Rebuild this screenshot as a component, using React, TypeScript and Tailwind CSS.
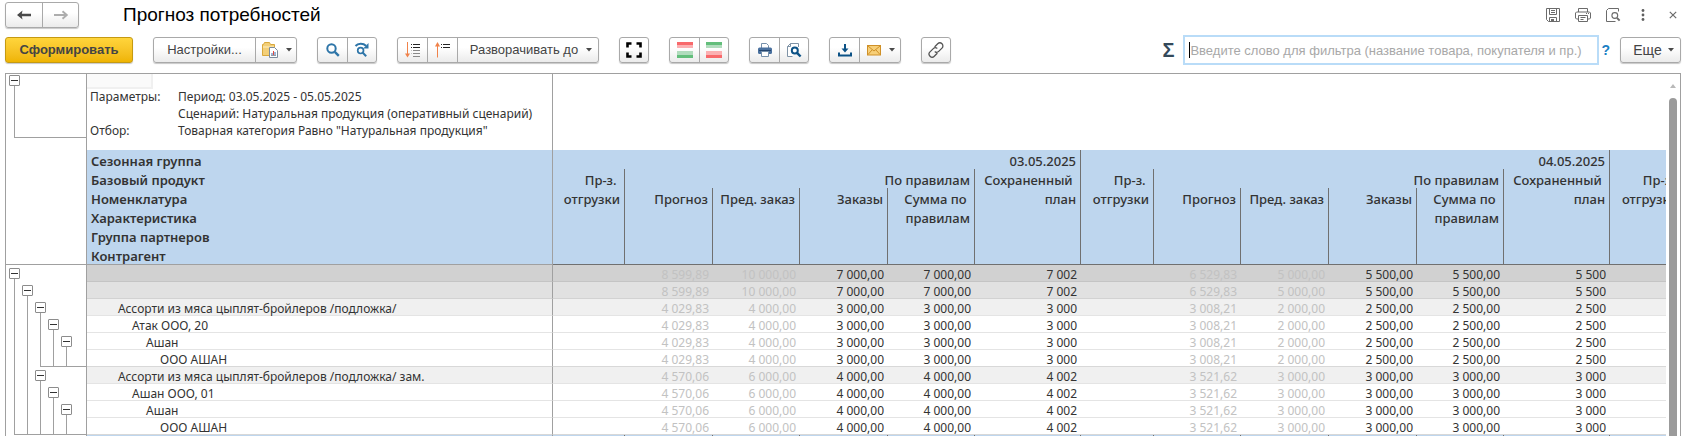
import React from "react";

/* ---------- icons ---------- */

const Svg = ({ w = 16, h = 16, children }: { w?: number; h?: number; children: React.ReactNode }) => (
  <svg width={w} height={h} viewBox={`0 0 ${w} ${h}`} fill="none" aria-hidden="true" className="shrink-0">
    {children}
  </svg>
);

const Caret = () => (
  <Svg w={6} h={4}>
    <path d="M0 0h6L3 3.6z" fill="#4a4a4a" />
  </Svg>
);

const ArrowLeft = () => (
  <Svg>
    <path d="M15 8H4" stroke="#4a4a4a" strokeWidth="2.4" />
    <path d="M1 8l5.5-4.6L5.600 8l.9 4.600z" fill="#4a4a4a" />
  </Svg>
);

const ArrowRight = () => (
  <Svg>
    <path d="M1 8h12M9.500 4.200L13.800 8l-4.300 3.800" stroke="#adadad" strokeWidth="1.900" />
  </Svg>
);

const FolderReport = () => (
  <Svg w={18} h={18}>
    <path d="M1.500 3.500h1l1-2h5l1 2h4v11h-12z" fill="#f3cf78" stroke="#d9a83c" />
    <path d="M2 6h11" stroke="#fbe6ae" strokeWidth="1.500" />
    <path d="M8.500 6.500h5l3 3v7h-8z" fill="#fff" stroke="#7b8b9c" />
    <path d="M11 14v-2M14 14v-3" stroke="#3b6fb0" />
    <path d="M12.500 14v-4" stroke="#e0483e" />
    <path d="M10 14.500h5" stroke="#8f9aa6" />
  </Svg>
);

const Search = () => (
  <Svg>
    <circle cx="6.500" cy="6.500" r="4.200" stroke="#2e75a8" strokeWidth="2" />
    <path d="M9.800 9.800l4 4" stroke="#2e75a8" strokeWidth="2.400" />
  </Svg>
);

const SearchNext = () => (
  <Svg>
    <path d="M1.500 4C4 1.200 9 .8 12 3.800" stroke="#2e75a8" strokeWidth="2" />
    <path d="M14.500 1v5.500H9.200z" fill="#2e75a8" />
    <circle cx="6.600" cy="8.600" r="2.900" stroke="#2e75a8" strokeWidth="1.700" />
    <path d="M8.800 10.800l3.400 3.400" stroke="#2e75a8" strokeWidth="2" />
  </Svg>
);

const ExpandRows = () => (
  <Svg>
    <path d="M2.500 0v13" stroke="#f0824a" />
    <path d="M0 11.500h5l-2.500 4z" fill="#f0824a" />
    <path d="M6 2.500h1M8 2.500h7M6 5.500h1M8 5.500h7" stroke="#222" />
    <path d="M8 8.500h7M8 11.500h7M8 14.500h7" stroke="#8a8a8a" />
    <path d="M6 8.500h1M6 11.500h1" stroke="#c4c4c4" />
  </Svg>
);

const CollapseRows = () => (
  <Svg>
    <path d="M2.500 3v12.500" stroke="#f0824a" />
    <path d="M0 4.500h5L2.500 0z" fill="#f0824a" />
    <path d="M6 2.500h1M8 2.500h7M6 5.500h1M8 5.500h7" stroke="#222" />
  </Svg>
);

const FullScreen = () => (
  <Svg>
    <path
      d="M1.500 5.500v-4h4M10.500 1.500h4v4M14.500 10.500v4h-4M5.500 14.500h-4v-4"
      stroke="#000"
      strokeWidth="2.600"
    />
  </Svg>
);

const Bands = ({ colors }: { colors: string[] }) => (
  <Svg>
    <path d="M0 0h16v3H0z" fill={colors[0]} />
    <path d="M0 3h16v3H0z" fill={colors[1]} />
    <path d="M0 9h16v4H0z" fill={colors[2]} />
    <path d="M0 13h16v3H0z" fill={colors[3]} />
  </Svg>
);

const Printer = () => (
  <Svg>
    <path d="M4.500 6V1.500h5l2 2V6" fill="#fff" stroke="#7690ab" />
    <rect x="1" y="5.500" width="14" height="6.500" rx="1.500" fill="#4a719f" />
    <path d="M2 8.500h12" stroke="#24456e" />
    <path d="M4.500 9.500h7v5h-7z" fill="#fff" stroke="#7690ab" />
  </Svg>
);

const Preview = () => (
  <Svg>
    <path d="M6.500 14.500h-5v-10l3-3h8V5" fill="#fff" stroke="#7f93a6" />
    <path d="M4.500 1.500v3h-3" stroke="#7f93a6" />
    <circle cx="8.800" cy="8.500" r="3" stroke="#0c5286" strokeWidth="2" />
    <path d="M11 10.800l3.600 3.700" stroke="#0c5286" strokeWidth="2.400" />
  </Svg>
);

const Download = () => (
  <Svg>
    <path d="M8 2v7" stroke="#0c5286" strokeWidth="2" />
    <path d="M4.500 6.500h7L8 10.500z" fill="#0c5286" />
    <path d="M2 10.500v3h12v-3" stroke="#0c5286" strokeWidth="2" />
  </Svg>
);

const Mail = () => (
  <Svg>
    <rect x="1.500" y="3.500" width="13" height="9.500" fill="#f7cf78" stroke="#cf9027" />
    <path d="M2 4l6 5 6-5M2 12.500l4.200-4.700M14 12.500L9.800 7.800" stroke="#cf9027" />
  </Svg>
);

const Link = () => (
  <Svg w={18} h={18}>
    <g stroke="#555" strokeWidth="1.300" strokeLinecap="round">
      <path d="M8 5.500l2.700-2.700a3 3 0 0 1 4.300 4.300L11.700 10.400a3 3 0 0 1-3.500.5" />
      <path d="M10 12.500l-2.700 2.700A3 3 0 0 1 3 10.900L6.300 7.600a3 3 0 0 1 3.500-.5" />
    </g>
  </Svg>
);

const Floppy = () => (
  <Svg>
    <path d="M1.500 1.500h13v13h-11l-2-2z" stroke="#6b6b6b" />
    <path d="M4.500 1.500v6h7v-6M6 3.500h4M6 5.500h4M4.500 14.500v-4h7v4" stroke="#6b6b6b" />
    <path d="M6 12h3v2.500H6z" fill="#6b6b6b" />
  </Svg>
);

const PrinterOutline = () => (
  <Svg>
    <path d="M3.500 5V1.500h9V5M3.500 12h-2l-1-1V6l1-1h13l1 1v5l-1 1h-2" stroke="#6b6b6b" />
    <path d="M3.500 8.500h9v6h-9zM5.500 10.500h5M5.500 12.500h3M11 6.500h1M13 6.500h1" stroke="#6b6b6b" />
  </Svg>
);

const PageSearch = () => (
  <Svg>
    <path d="M13.500 4.500v-3h-10l-2 2v11h9" stroke="#6b6b6b" />
    <circle cx="9.800" cy="8.500" r="2.900" stroke="#6b6b6b" strokeWidth="1.100" />
    <path d="M12 10.800l2.600 2.800" stroke="#6b6b6b" strokeWidth="1.900" />
  </Svg>
);

const Dots = () => (
  <Svg>
    <circle cx="8" cy="3.500" r="1.400" fill="#5f5f5f" />
    <circle cx="8" cy="8" r="1.400" fill="#5f5f5f" />
    <circle cx="8" cy="12.500" r="1.400" fill="#5f5f5f" />
  </Svg>
);

const Cross = () => (
  <Svg w={8} h={8}>
    <path d="M.8.8l6.400 6.400M7.200.8L.8 7.200" stroke="#6b6b6b" strokeWidth="1.200" />
  </Svg>
);

/* ---------- toolbar ---------- */

const Group = ({ children }: { children: React.ReactNode }) => (
  <div className="flex h-[26px] shrink-0 divide-x divide-[#a9a9a9] overflow-hidden rounded-[3px] border border-[#a9a9a9] bg-linear-to-b from-white from-40% to-[#ebebeb] shadow-[0_1px_1px_#c8c8c8]">
    {children}
  </div>
);

const IconButton = ({
  label,
  className = "w-[30px]",
  children,
}: {
  label: string;
  className?: string;
  children: React.ReactNode;
}) => (
  <button type="button" aria-label={label} className={`flex items-center justify-center ${className}`}>
    {children}
  </button>
);

const Toolbar = () => (
  <div className="flex h-[30px] items-center gap-5">
    <button
      type="button"
      className="h-[26px] w-32 shrink-0 rounded-[3px] border border-[#c59a12] bg-linear-to-b from-[#ffd53b] to-[#efb400] font-bold text-[#444] shadow-[0_1px_1px_#c8c8c8]"
    >
      Сформировать
    </button>
    <Group>
      <button type="button" className="w-[102px]">
        Настройки...
      </button>
      <IconButton label="Варианты отчета" className="w-10 gap-[7px]">
        <FolderReport />
        <Caret />
      </IconButton>
    </Group>
    <Group>
      <IconButton label="Найти">
        <Search />
      </IconButton>
      <IconButton label="Найти далее" className="w-7">
        <SearchNext />
      </IconButton>
    </Group>
    <Group>
      <IconButton label="Развернуть группы">
        <ExpandRows />
      </IconButton>
      <IconButton label="Свернуть группы">
        <CollapseRows />
      </IconButton>
      <button type="button" className="flex w-[140px] items-center justify-center gap-2 pl-[6px]">
        Разворачивать до
        <Caret />
      </button>
    </Group>
    <Group>
      <IconButton label="Во весь экран" className="w-7">
        <FullScreen />
      </IconButton>
    </Group>
    <Group>
      <IconButton label="Красный сверху">
        <Bands colors={["#f8696b", "#fbb0b2", "#b1dcbd", "#63be7b"]} />
      </IconButton>
      <IconButton label="Зеленый сверху" className="w-7">
        <Bands colors={["#63be7b", "#b1dcbd", "#fbb0b2", "#f8696b"]} />
      </IconButton>
    </Group>
    <Group>
      <IconButton label="Печать">
        <Printer />
      </IconButton>
      <IconButton label="Предварительный просмотр" className="w-7">
        <Preview />
      </IconButton>
    </Group>
    <Group>
      <IconButton label="Сохранить">
        <Download />
      </IconButton>
      <IconButton label="Отправить" className="w-10 gap-[7px]">
        <Mail />
        <Caret />
      </IconButton>
    </Group>
    <Group>
      <IconButton label="Получить ссылку" className="w-7">
        <Link />
      </IconButton>
    </Group>
    <div className="ml-auto flex items-center">
      <label htmlFor="filter" className="mr-[9px] text-[20px] leading-[30px] font-bold text-[#34495a]">
        Σ
      </label>
      <div className="relative">
        <input
          id="filter"
          type="text"
          placeholder="Введите слово для фильтра (название товара, покупателя и пр.)"
          className="block h-[30px] w-[416px] border-2 border-[#b9dcf8] bg-white px-[5px] outline-none placeholder:text-[#a8a8a8]"
        />
        <span className="absolute top-[7px] left-[6px] h-4 w-px bg-black" />
      </div>
      <a href="#help" className="mr-[10px] ml-[2px] text-[14px] font-bold text-[#1b7fc4]">
        ?
      </a>
      <Group>
        <button type="button" className="flex w-[59px] items-center justify-center gap-[6px] pl-[6px] text-[14px]">
          Еще
          <Caret />
        </button>
      </Group>
    </div>
  </div>
);

const TitleBar = () => (
  <div className="flex h-[30px] items-center">
    <Group>
      <IconButton label="Назад" className="w-[37px]">
        <ArrowLeft />
      </IconButton>
      <IconButton label="Вперед" className="w-[35px]">
        <ArrowRight />
      </IconButton>
    </Group>
    <h1 className="ml-11 text-[19px] text-black">Прогноз потребностей</h1>
    <div className="ml-auto flex items-center gap-[14px] pr-1">
      <IconButton label="Сохранить файл" className="w-4">
        <Floppy />
      </IconButton>
      <IconButton label="Печать файла" className="w-4">
        <PrinterOutline />
      </IconButton>
      <IconButton label="Просмотр" className="w-4">
        <PageSearch />
      </IconButton>
      <IconButton label="Еще действия" className="w-4">
        <Dots />
      </IconButton>
      <IconButton label="Закрыть" className="ml-1 w-2">
        <Cross />
      </IconButton>
    </div>
  </div>
);

/* ---------- report ---------- */

const TreeToggle = () => (
  <button
    type="button"
    aria-label="Свернуть"
    className="flex size-[11px] shrink-0 items-center justify-center rounded-[1px] border border-[#8c8c8c] bg-white"
  >
    <span className="h-px w-[7px] bg-[#333]" />
  </button>
);

type Slot = "line" | "toggle" | "corner" | "run";

const TreeSlot = ({ kind }: { kind: Slot }) => {
  if (kind === "toggle")
    return (
      <div className="flex h-full w-[13px] flex-col items-center pt-[3px]">
        <TreeToggle />
        <span className="w-px flex-1 bg-[#a0a0a0]" />
      </div>
    );
  if (kind === "corner")
    return (
      <div className="flex h-full w-[13px] justify-end">
        <span className="w-[7px] border-b border-l border-[#a0a0a0]" />
      </div>
    );
  return (
    <div className={`flex h-full w-[13px] justify-center border-[#a0a0a0] ${kind === "run" ? "border-b" : ""}`}>
      <span className="w-px bg-[#a0a0a0]" />
    </div>
  );
};

type Row = {
  label: string;
  level: number;
  slots: Slot[];
  closes?: boolean;
  values: string[];
};

const d0 = ["8 599,89", "10 000,00", "7 000,00", "7 000,00", "7 002", "6 529,83", "5 000,00", "5 500,00", "5 500,00", "5 500"];
const d1 = ["4 029,83", "4 000,00", "3 000,00", "3 000,00", "3 000", "3 008,21", "2 000,00", "2 500,00", "2 500,00", "2 500"];
const d2 = ["4 570,06", "6 000,00", "4 000,00", "4 000,00", "4 002", "3 521,62", "3 000,00", "3 000,00", "3 000,00", "3 000"];

const rows: Row[] = [
  { label: "", level: 0, slots: ["toggle"], values: d0 },
  { label: "", level: 1, slots: ["line", "toggle"], values: d0 },
  { label: "Ассорти из мяса цыплят-бройлеров /подложка/", level: 2, slots: ["line", "line", "toggle"], values: d1 },
  { label: "Атак ООО, 20", level: 3, slots: ["line", "line", "line", "toggle"], values: d1 },
  { label: "Ашан", level: 4, slots: ["line", "line", "line", "line", "toggle"], values: d1 },
  { label: "ООО АШАН", level: 5, slots: ["line", "line", "corner", "run", "run"], closes: true, values: d1 },
  { label: "Ассорти из мяса цыплят-бройлеров /подложка/ зам.", level: 2, slots: ["line", "line", "toggle"], values: d2 },
  { label: "Ашан ООО, 01", level: 3, slots: ["line", "line", "line", "toggle"], values: d2 },
  { label: "Ашан", level: 4, slots: ["line", "line", "line", "line", "toggle"], values: d2 },
  { label: "ООО АШАН", level: 5, slots: ["corner", "run", "run", "run", "run"], closes: true, values: d2 },
];

const levelStyle = [
  "bg-[#d1d1d1] border-[#c4c4c4]",
  "bg-[#e1e1e1] border-[#d2d2d2]",
  "bg-[#f0f0f0] border-[#e4e4e4]",
  "border-[#e4e4e4]",
  "border-[#e4e4e4]",
  "border-[#d8d8d8]",
];

const levelIndent = ["pl-[3px]", "pl-[17px]", "pl-[31px]", "pl-[45px]", "pl-[59px]", "pl-[73px]"];

const headLeft = "border-r border-r-[#a0a0a0] pt-1 pl-1 text-left leading-[15px] font-semibold";
const headBase = "border-r border-[#707070] pr-1 text-right align-top font-medium whitespace-nowrap";
const headLine = `${headBase} pt-1 leading-[15px]`;
const headTall = `${headBase} border-b pt-[2px] leading-[19px]`;
const gutter = "border-r border-[#a0a0a0] bg-white p-0";

const days = ["03.05.2025", "04.05.2025"];

const ReportTable = () => (
  <table className="w-[1755px] table-fixed border-separate border-spacing-0 text-[12px] leading-[13px] text-[#333]">
    <colgroup>
      <col className="w-[81px]" />
      <col className="w-[466px]" />
      <col className="w-[72px]" />
      <col className="w-[88px]" />
      <col className="w-[87px]" />
      <col className="w-[88px]" />
      <col className="w-[87px]" />
      <col className="w-[106px]" />
      <col className="w-[73px]" />
      <col className="w-[87px]" />
      <col className="w-[88px]" />
      <col className="w-[88px]" />
      <col className="w-[87px]" />
      <col className="w-[106px]" />
      <col className="w-[73px]" />
      <col className="w-[78px]" />
    </colgroup>
    <thead className="bg-[#bed6ee] text-[13px]">
      <tr>
        <td rowSpan={6} className={`${gutter} border-b`} />
        <th className={headLeft}>Сезонная группа</th>
        {days.map((day) => (
          <th key={day} colSpan={6} className={headLine}>
            {day}
          </th>
        ))}
        <td colSpan={2} />
      </tr>
      <tr>
        <th className={headLeft}>Базовый продукт</th>
        {days.map((day) => (
          <React.Fragment key={day}>
            <th rowSpan={5} className={headTall}>
              Пр-з.&nbsp;
              <br />
              отгрузки
            </th>
            <th colSpan={4} className={headLine}>
              По правилам
            </th>
            <th rowSpan={5} className={headTall}>
              Сохраненный&nbsp;
              <br />
              план
            </th>
          </React.Fragment>
        ))}
        <th rowSpan={5} className={headTall}>
          Пр-з.&nbsp;
          <br />
          отгрузки
        </th>
        <td rowSpan={5} />
      </tr>
      <tr>
        <th className={headLeft}>Номенклатура</th>
        {days.map((day) => (
          <React.Fragment key={day}>
            <th rowSpan={4} className={headTall}>
              Прогноз
            </th>
            <th rowSpan={4} className={headTall}>
              Пред. заказ
            </th>
            <th rowSpan={4} className={headTall}>
              Заказы
            </th>
            <th rowSpan={4} className={headTall}>
              Сумма по&nbsp;
              <br />
              правилам
            </th>
          </React.Fragment>
        ))}
      </tr>
      <tr>
        <th className={headLeft}>Характеристика</th>
      </tr>
      <tr>
        <th className={headLeft}>Группа партнеров</th>
      </tr>
      <tr>
        <th className={`${headLeft} border-b border-[#a0a0a0]`}>Контрагент</th>
      </tr>
    </thead>
    <tbody>
      {rows.map((row, i) => {
        const tone = levelStyle[row.level];
        return (
          <tr key={i}>
            <td className={gutter}>
              <div className="flex h-[17px] pl-[2px]">
                {row.slots.map((kind, s) => (
                  <TreeSlot key={s} kind={kind} />
                ))}
                {row.closes && <div className="flex-1 border-b border-[#a0a0a0]" />}
              </div>
            </td>
            <th
              className={`border-r border-b border-r-[#a0a0a0]! pt-[3px] text-left font-normal ${tone} ${levelIndent[row.level]}`}
            >
              {row.label}
            </th>
            {row.values.map((value, v) => (
              <React.Fragment key={v}>
                {v % 5 === 0 && <td className={`border-b ${tone}`} />}
                <td
                  className={`border-b pt-[3px] pr-1 text-right whitespace-nowrap ${tone} ${v % 5 < 2 ? "text-[#c2c2c2]" : ""}`}
                >
                  {value}
                </td>
              </React.Fragment>
            ))}
            <td colSpan={2} className={`border-b ${tone}`} />
          </tr>
        );
      })}
    </tbody>
    <tfoot className="bg-[#bed6ee]">
      <tr>
        <td className={`${gutter} h-[17px]`} />
        <td className="border-r border-[#a0a0a0]" />
        {Array.from({ length: 14 }, (_, c) => (
          <td key={c} className="border-r border-[#707070]" />
        ))}
      </tr>
    </tfoot>
  </table>
);

const Parameters = () => (
  <div className="flex h-[76px] text-[12px] leading-[17px] text-[#333]">
    <div className="w-[81px] shrink-0 border-r border-[#a0a0a0] pt-px pl-[3px]">
      <TreeToggle />
      <div className="ml-[5px] h-[52px] border-b border-l border-[#a0a0a0]" />
    </div>
    <div className="w-[466px] shrink-0 border-r border-[#a0a0a0]">
      <div className="h-[15px] w-[66px] border-r-2 border-b-2 border-[#f0f0f0] bg-[#fafafa]" />
      <dl className="-mt-px grid grid-cols-[88px_1fr] pl-[3px]">
        <dt>Параметры:</dt>
        <dd>Период: 03.05.2025 - 05.05.2025</dd>
        <dd className="col-start-2">Сценарий: Натуральная продукция (оперативный сценарий)</dd>
        <dt>Отбор:</dt>
        <dd>Товарная категория Равно "Натуральная продукция"</dd>
      </dl>
    </div>
  </div>
);

export default function App() {
  return (
    <div className="flex h-screen flex-col overflow-hidden bg-white pr-[7px] pl-[5px] font-['Liberation_Sans',Arial,sans-serif] text-[13px] text-[#444]">
      <TitleBar />
      <div className="pt-[5px] pb-2">
        <Toolbar />
      </div>
      <main className="flex min-h-0 flex-1 border-x border-t border-[#a0a0a0] font-['Noto_Sans','Open_Sans',sans-serif]">
        <div className="min-w-0 flex-1 overflow-hidden">
          <Parameters />
          <ReportTable />
        </div>
        <div className="flex w-[14px] shrink-0 flex-col items-center pt-[10px]">
          <Svg w={6} h={4}>
            <path d="M3 0l3 4H0z" fill="#b9b9b9" />
          </Svg>
          <div className="mt-[10px] w-2 flex-1 rounded-t-[4px] bg-[#9b9b9b]" />
        </div>
      </main>
    </div>
  );
}
